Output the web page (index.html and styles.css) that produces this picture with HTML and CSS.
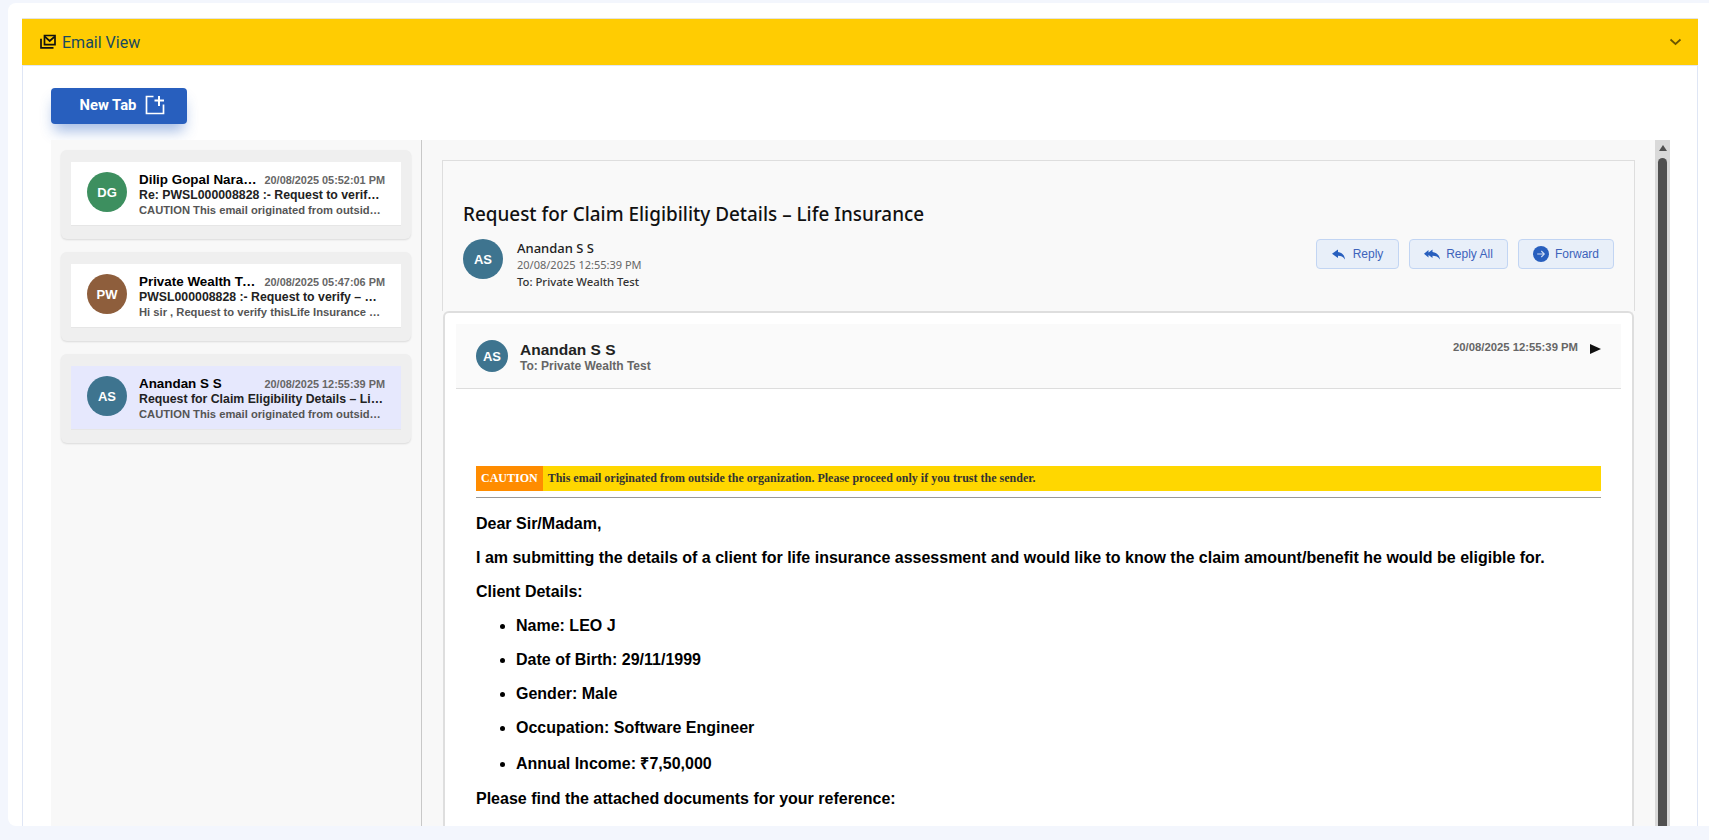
FILE: index.html
```html
<!DOCTYPE html>
<html lang="en">
<head>
<meta charset="utf-8">
<title>Email View</title>
<link rel="stylesheet" href="styles.css">
</head>
<body>
<main class="card">
  <section class="accordion">
    <header class="acc-head">
      <svg class="acc-icon" viewBox="0 0 16 16"><path d="M4.500 1.500h10.500v9.200H4.500z" fill="none" stroke="#111" stroke-width="1.700"/><path d="M4.800 2.600 9.700 7l4.900-4.400" fill="none" stroke="#111" stroke-width="1.700"/><path d="M1 4.800v9h12.500" fill="none" stroke="#111" stroke-width="1.700"/></svg>
      <span class="acc-title">Email View</span>
      <svg class="chev" viewBox="0 0 12 8"><path d="M1 1.500 6 6l5-4.500" fill="none" stroke="#6b5500" stroke-width="1.700"/></svg>
    </header>
    <div class="acc-body">
      <div class="toolbar">
        <button class="new-tab">New Tab
          <svg class="new-icon" viewBox="0 0 20 20"><path d="M8.500 1.500H1.500v17h17v-9" fill="none" stroke="#fff" stroke-width="1.700"/><path d="M14 1v10M9.500 5.500h9.500" fill="none" stroke="#fff" stroke-width="2"/></svg>
        </button>
      </div>
      <div class="panel">
        <aside class="list">
          <article class="item">
            <div class="item-in">
              <div class="avatar av-green">DG</div>
              <div class="meta">
                <div class="row"><span class="sender">Dilip Gopal Narayanan</span><span class="stamp">20/08/2025 05:52:01 PM</span></div>
                <div class="subject">Re: PWSL000008828 :- Request to verify – Life Insurance</div>
                <div class="preview">CAUTION This email originated from outside the organization</div>
              </div>
            </div>
          </article>
          <article class="item">
            <div class="item-in">
              <div class="avatar av-brown">PW</div>
              <div class="meta">
                <div class="row"><span class="sender">Private Wealth Test</span><span class="stamp">20/08/2025 05:47:06 PM</span></div>
                <div class="subject">PWSL000008828 :- Request to verify – Life Insurance</div>
                <div class="preview">Hi sir , Request to verify thisLife Insurance assessment now</div>
              </div>
            </div>
          </article>
          <article class="item">
            <div class="item-in selected">
              <div class="avatar av-blue">AS</div>
              <div class="meta">
                <div class="row"><span class="sender">Anandan S S</span><span class="stamp">20/08/2025 12:55:39 PM</span></div>
                <div class="subject">Request for Claim Eligibility Details – Life Insurance</div>
                <div class="preview">CAUTION This email originated from outside the organization</div>
              </div>
            </div>
          </article>
        </aside>
        <div class="reader">
          <div class="mail-head">
            <h1 class="mail-title">Request for Claim Eligibility Details – Life Insurance</h1>
            <div class="mail-info">
              <div class="avatar av-blue">AS</div>
              <div class="mail-who">
                <div class="who-name">Anandan S S</div>
                <div class="who-date">20/08/2025 12:55:39 PM</div>
                <div class="who-to">To: Private Wealth Test</div>
              </div>
              <div class="actions">
                <button class="act act-reply"><svg class="act-icon" viewBox="0 0 13 11"><path d="M6 .5 0 4.800l6 4.200V6.700c3 0 5.300.7 7 3.800C12.800 6.500 10 3.500 6 3z"/></svg>Reply</button>
                <button class="act act-all"><svg class="all-icon" viewBox="0 0 16 11"><path d="M4.500 1 0 4.800l4.500 3.800zM8.500.5 3 4.800 8.500 9V6.700c3 0 5.800.7 7.500 3.800C15.800 6.500 12.500 3.500 8.500 3z"/></svg>Reply All</button>
                <button class="act act-fwd"><svg class="fwd-icon" viewBox="0 0 16 16"><circle cx="8" cy="8" r="8" fill="#285fbe"/><path d="M4.200 8h7M8.300 5l3 3-3 3" fill="none" stroke="#cfdcf3" stroke-width="1.100"/></svg>Forward</button>
              </div>
            </div>
          </div>
          <div class="message">
            <div class="msg-head">
              <div class="avatar avatar-sm av-blue">AS</div>
              <div class="msg-who">
                <div class="msg-name">Anandan S S</div>
                <div class="msg-to">To: Private Wealth Test</div>
              </div>
              <span class="msg-date">20/08/2025 12:55:39 PM</span>
              <span class="msg-arrow"></span>
            </div>
            <div class="msg-body">
              <div class="caution"><span class="caution-tag">CAUTION</span><span class="caution-text">This email originated from outside the organization. Please proceed only if you trust the sender.</span></div>
              <hr class="rule">
              <p>Dear Sir/Madam,</p>
              <p>I am submitting the details of a client for life insurance assessment and would like to know the claim amount/benefit he would be eligible for.</p>
              <p>Client Details:</p>
              <ul>
                <li>Name: LEO J</li>
                <li>Date of Birth: 29/11/1999</li>
                <li>Gender: Male</li>
                <li>Occupation: Software Engineer</li>
                <li class="income">Annual Income: ₹7,50,000</li>
              </ul>
              <p>Please find the attached documents for your reference:</p>
            </div>
          </div>
        </div>
        <div class="scrollbar"><span class="sb-up"></span><span class="sb-thumb"></span></div>
      </div>
    </div>
  </section>
</main>
</body>
</html>
```
FILE: styles.css
```css
* { box-sizing: border-box; }
html, body { margin: 0; height: 840px; overflow: hidden; }
body { background: #f3f6fd; font-family: "Liberation Sans", Arial, sans-serif; color: #000; }
.card { height: 823px; margin: 3px 0 0 8px; padding: 15px 11px 0 14px; background: #fff; border-radius: 8px 0 0 8px; overflow: hidden; }
.accordion { height: 808px; display: flex; flex-direction: column; border-left: 1px solid #dfe6f5; border-right: 1px solid #dfe6f5; }
.acc-head { flex: none; height: 48px; margin-left: -1px; margin-right: -1px; padding: 0 16px 0 18px; display: flex; align-items: center; background: #ffcc02; border-top: 1px solid #e3e3e3; border-bottom: 1px solid #e1e7f2; }
.acc-icon { width: 16px; height: 16px; margin-right: 6px; }
.acc-title { flex: 1; font-family: Roboto, "Noto Sans", sans-serif; font-size: 16px; color: #174a5f; }
.chev { width: 13px; height: 8px; }
.acc-body { flex: 1; min-height: 0; display: flex; flex-direction: column; padding: 22px 27px 0 28px; }
.toolbar { flex: none; height: 52px; }
.new-tab { width: 136px; height: 36px; padding: 0 0 2px 7px; display: flex; align-items: center; justify-content: center; gap: 9px; background: #285fbe; color: #fff; border: 0; border-radius: 4px; font-family: Roboto, sans-serif; font-weight: 700; font-size: 14.800px; box-shadow: 0 10px 14px -3px rgba(40, 95, 190, .42); }
.new-icon { width: 20px; height: 20px; }
.panel { flex: 1; min-height: 0; display: flex; background: #f8f8f8; overflow: hidden; }
.list { flex: none; width: 371px; padding: 10px 10px 0 10px; border-right: 1px solid #c8c8c8; }
.item { height: 89px; margin-bottom: 13px; padding: 12px 10px 13px 10px; background: #efefef; border-radius: 6px; box-shadow: 0 1px 2px rgba(0, 0, 0, .12); }
.item-in { height: 64px; display: flex; align-items: flex-start; padding: 10px 16px 0 16px; background: #fff; border-bottom: 1px solid #e6e6e6; }
.item-in.selected { background: #e6e8fd; }
.avatar { flex: none; width: 40px; height: 40px; border-radius: 50%; display: flex; align-items: center; justify-content: center; color: #fff; font-weight: 700; font-size: 13px; }
.avatar-sm { width: 32px; height: 32px; }
.av-green { background: #3d8f5f; }
.av-brown { background: #8e5e3c; }
.av-blue { background: #3e748f; }
.meta { flex: 1; min-width: 0; margin-left: 12px; }
.row { display: flex; align-items: baseline; justify-content: space-between; height: 16px; line-height: 15px; }
.sender { width: 118px; font-size: 13.400px; font-weight: 700; white-space: nowrap; overflow: hidden; text-overflow: ellipsis; }
.stamp { font-size: 10.900px; font-weight: 700; color: #666; white-space: nowrap; }
.subject { width: 245px; font-size: 12.300px; line-height: 15px; font-weight: 700; color: #222; white-space: nowrap; overflow: hidden; text-overflow: ellipsis; }
.preview { width: 243px; font-size: 11.200px; line-height: 15px; font-weight: 700; color: #555; white-space: nowrap; overflow: hidden; text-overflow: ellipsis; }
.reader { flex: 1; min-width: 0; padding: 20px 20px 0 20px; display: flex; flex-direction: column; }
.mail-head { flex: none; height: 151px; padding: 40px 20px 0 20px; border: 1px solid #dedede; border-bottom: 0; background: #f9f9f9; }
.mail-title { margin: 0; font-family: "Noto Sans", sans-serif; font-size: 18.900px; line-height: 26px; font-weight: 500; color: #111; }
.mail-info { display: flex; align-items: flex-start; margin-top: 12px; }
.mail-who { flex: 1; margin-left: 14px; padding-top: 1px; font-family: "Noto Sans", sans-serif; }
.who-name { font-size: 13px; line-height: 17px; font-weight: 500; color: #222; }
.who-date { font-size: 11px; line-height: 16px; color: #666; }
.who-to { font-size: 11.300px; line-height: 17px; font-weight: 500; color: #333; }
.actions { display: flex; gap: 10px; }
.act { height: 30px; padding: 0; display: flex; align-items: center; justify-content: center; background: #e8eff9; border: 1px solid #c2d5f3; border-radius: 4px; color: #3d63bb; font-family: "Liberation Sans", sans-serif; font-size: 12px; }
.act-reply { width: 83px; }
.act-all { width: 99px; }
.act-fwd { width: 96px; }
.act-icon { width: 13px; height: 11px; margin-right: 8px; fill: #285fbe; }
.all-icon { width: 16px; height: 11px; margin-right: 6px; fill: #285fbe; }
.fwd-icon { width: 16px; height: 16px; margin-right: 6px; }
.message { flex: 1; min-height: 0; margin: 0 1px; padding: 11px 11px 0 11px; background: #fff; border: 2px solid #dedede; border-bottom: 0; border-radius: 6px 6px 0 0; overflow: hidden; }
.msg-head { height: 65px; display: flex; align-items: flex-start; padding: 16px 0 0 20px; background: #fafafa; border-bottom: 1px solid #ddd; }
.msg-who { flex: 1; margin-left: 12px; padding-top: 1px; }
.msg-name { font-size: 15.500px; line-height: 18px; font-weight: 700; color: #222; }
.msg-to { font-size: 12px; line-height: 14px; font-weight: 700; color: #666; }
.msg-date { font-size: 11.300px; line-height: 14px; font-weight: 700; color: #666; }
.msg-arrow { width: 0; height: 0; margin: 4px 20px 0 12px; border-style: solid; border-width: 5.500px 0 5.500px 11px; border-color: transparent transparent transparent #111; }
.msg-body { padding: 77px 20px 0 20px; }
.caution { height: 25px; display: flex; align-items: center; background: #ffd700; font-family: "Liberation Serif", serif; font-size: 12px; font-weight: 700; }
.caution-tag { height: 100%; padding: 0 5px; display: flex; align-items: center; background: #ff8c00; color: #fff; font-size: 12px; }
.caution-text { margin-left: 5px; color: #333; }
.rule { height: 1px; margin: 6px 0 17px; border: 0; background: #999; }
.msg-body p, .msg-body li { margin: 16px 0; font-size: 16px; line-height: 18px; font-weight: 700; }
.msg-body .income { line-height: 21px; }
.msg-body ul { margin: 16px 0; padding-left: 40px; }
.rule + p { margin-top: 0; }
.scrollbar { flex: none; width: 15px; display: flex; flex-direction: column; align-items: center; background: #d9d9d9; }
.sb-up { width: 0; height: 0; margin: 5px 0 7px; border-style: solid; border-width: 0 4.500px 6px 4.500px; border-color: transparent transparent #505050 transparent; }
.sb-thumb { flex: 1; width: 9px; background: #505050; border-radius: 5px 5px 0 0; }
```
